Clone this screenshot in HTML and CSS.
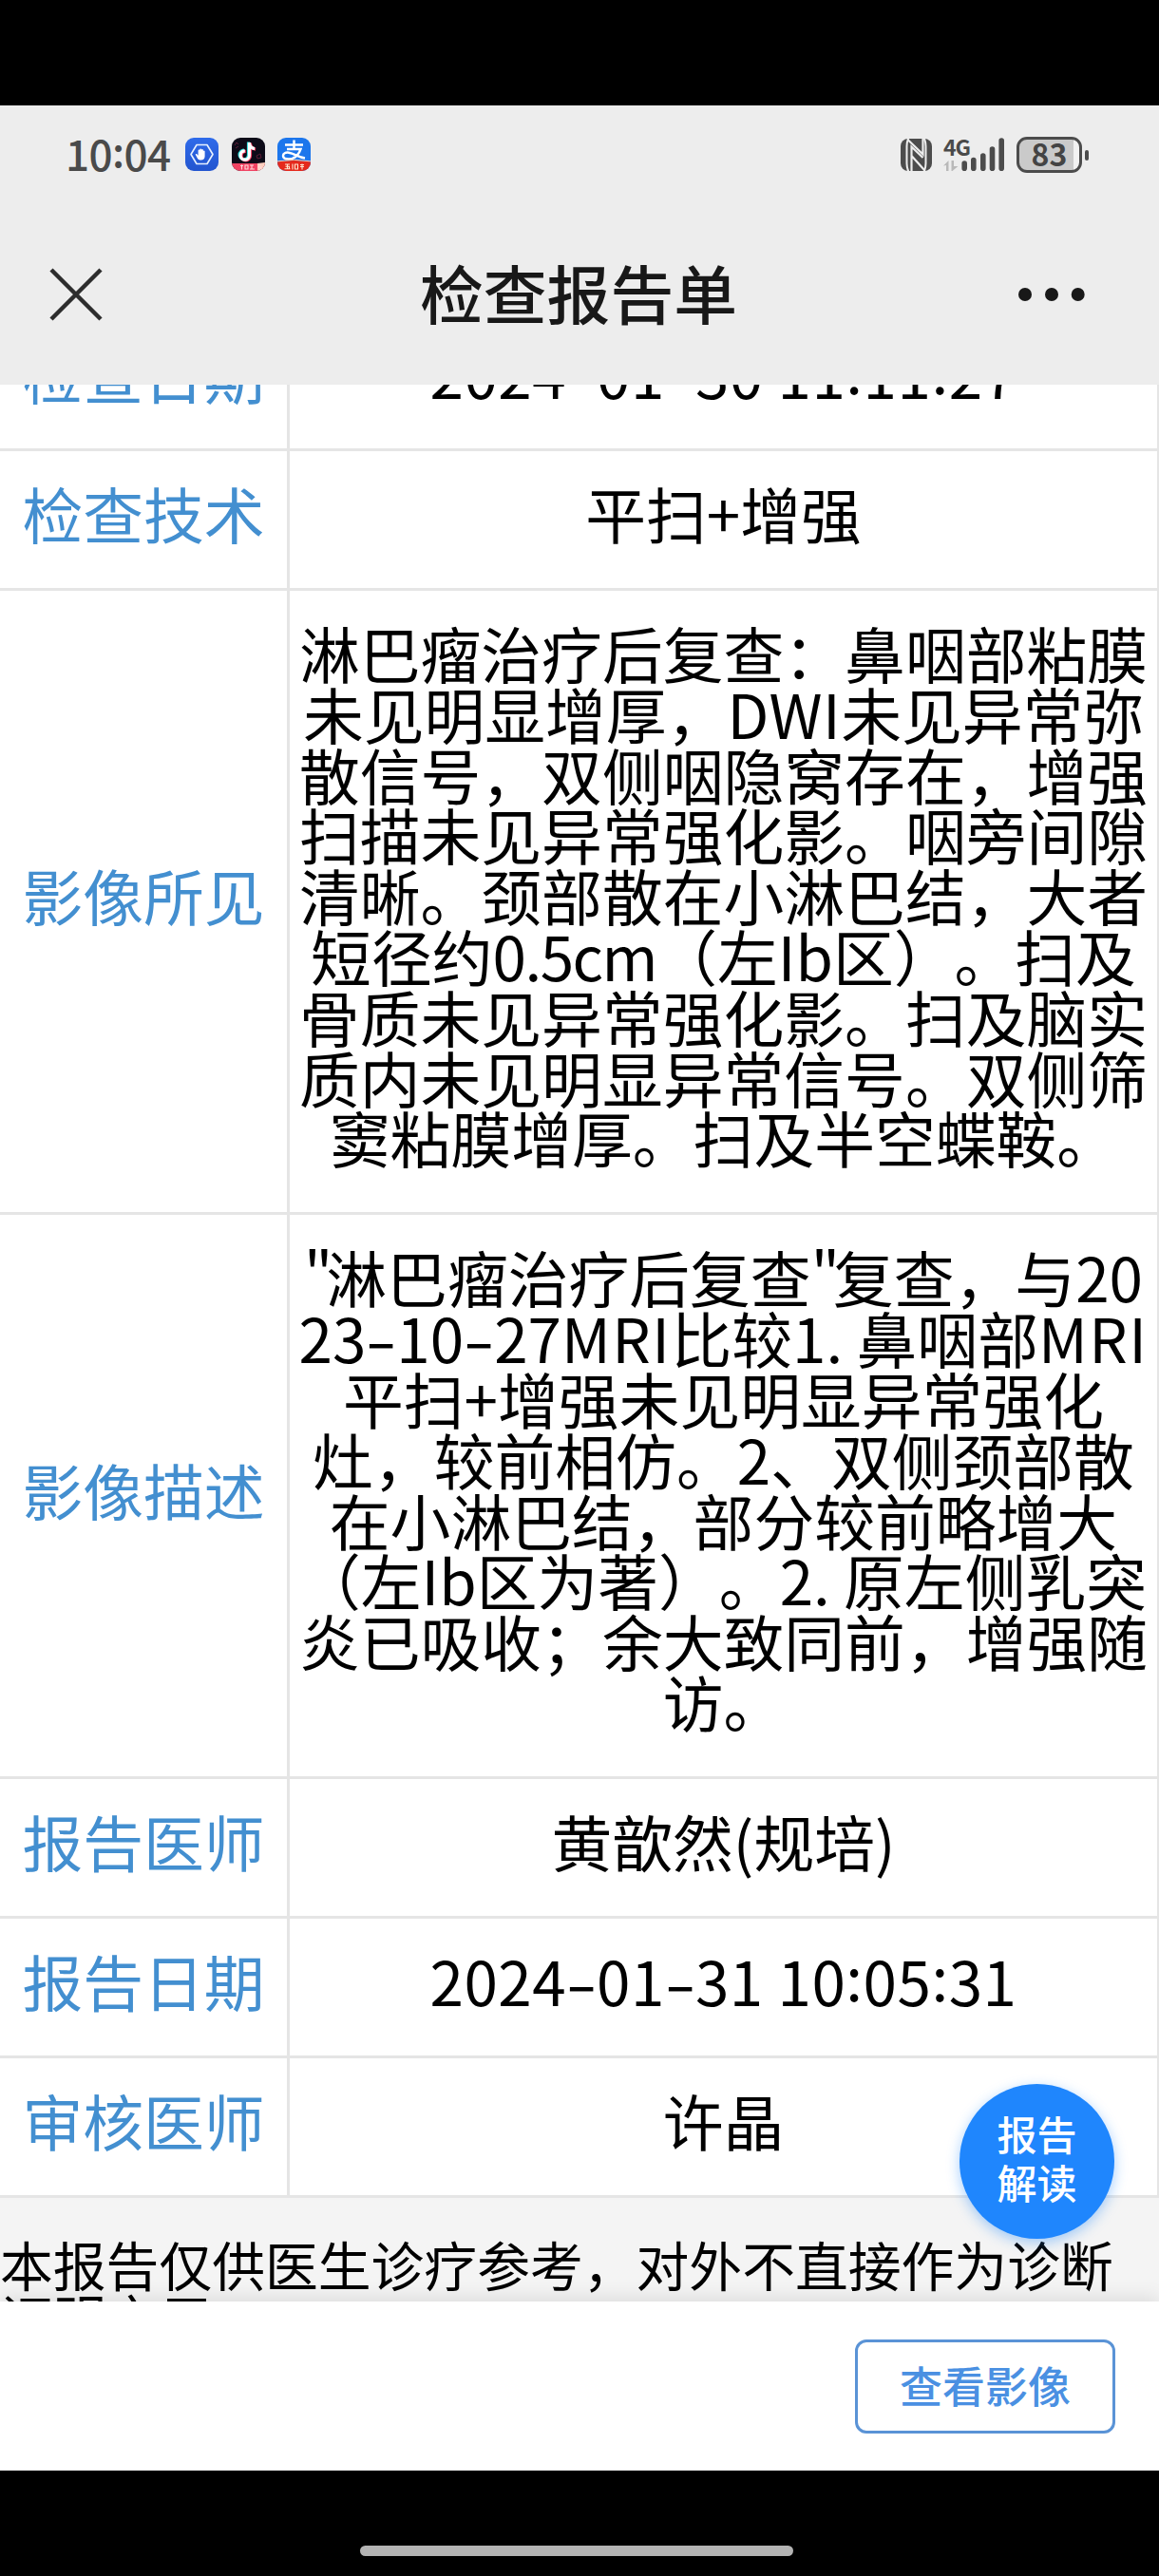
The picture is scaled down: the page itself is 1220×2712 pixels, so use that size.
FILE: index.html
```html
<!DOCTYPE html>
<html lang="zh-CN">
<head>
<meta charset="utf-8">
<title>检查报告单</title>
<link rel="stylesheet" href="styles.css">
</head>
<body>
<div class="phone">
  <header class="top">
    <div class="status">
      <span class="clock">10<span class="colon">:</span>04</span>
      <div class="apps">
        <svg class="app" viewBox="0 0 35 35">
          <defs><linearGradient id="blue" x1="0" y1="0" x2="0" y2="1"><stop offset="0" stop-color="#2f6bea"/><stop offset="1" stop-color="#2355cf"/></linearGradient></defs>
          <rect width="35" height="35" rx="9" fill="url(#blue)"/>
          <path d="M12 7.5h11l6 10-6 10H12l-6-10z" fill="none" stroke="#e8f1ff" stroke-width="1.6" stroke-linejoin="round"/>
          <path d="M13.2 22.3l-2.3-4.2c-.5-1 .7-1.6 1.400-.8l1.300 1.500v-5.300c0-1.200 1.700-1.200 1.700 0v-1c0-1.200 1.800-1.200 1.800 0v.500c0-1.200 1.800-1.200 1.800 0v1.200c0-1.100 1.700-1.100 1.700 0v5.300c0 2.500-1.500 4-4 4-1.600 0-2.600-.3-3.400-1.200z" fill="#fff"/>
        </svg>
        <svg class="app" viewBox="0 0 35 35">
          <defs><clipPath id="tile"><rect width="35" height="35" rx="9"/></clipPath></defs>
          <g clip-path="url(#tile)">
            <rect width="35" height="35" fill="#0d0b18"/>
            <path d="M3 8l2-3 2 2M4 11l3-2M26 19l4-2 1 4-4 1z" fill="none" stroke="#5d1c36" stroke-width="1"/>
            <g fill="none" stroke-width="3.200">
              <path d="M18.500 5v13.500a4.700 4.700 0 1 1-4.700-4.700M18.500 6c.6 3.600 2.500 5.200 5.600 5.500" stroke="#2ce0e0" transform="translate(-1 -.6)"/>
              <path d="M18.500 5v13.500a4.700 4.700 0 1 1-4.700-4.700M18.500 6c.6 3.600 2.500 5.200 5.600 5.500" stroke="#f5365c" transform="translate(1 .6)"/>
              <path d="M18.500 5v13.500a4.700 4.700 0 1 1-4.700-4.700M18.500 6c.6 3.600 2.500 5.200 5.600 5.500" stroke="#fff"/>
            </g>
            <path d="M0 27h35v8H0z" fill="#f04363"/>
            <path d="M27 27l8-1v9h-8z" fill="#ffd0c0"/>
            <path d="M9 29.500h3m-1.500-1v5M14 29h3v4h-3zM19 29h4m-2 0v4m-2 0h5M30 28l-2 3h3l-2 3" fill="none" stroke="#ffd9d9" stroke-width="1.100"/>
          </g>
        </svg>
        <svg class="app" viewBox="0 0 35 35">
          <g clip-path="url(#tile)">
            <rect width="35" height="35" fill="#1c76ec"/>
            <path d="M8 7.500h19M17.500 2.500v9.500M10 12h14.500c-1.500 5-6 10.500-12.500 10.500-4 0-6-1.500-6-3.500 0-2.500 2.500-3.800 6-3.300 6 .9 9.500 4.600 17 5.800" fill="none" stroke="#fff" stroke-width="2.500"/>
            <path d="M0 25.500q17.500-3 35 0V35H0z" fill="#e5291c"/>
            <path d="M0 24.800q17.500-3 35 0" fill="none" stroke="#ffc9a8" stroke-width="1"/>
            <path d="M8 28h5m-2.500 0v4.500M8.500 30.200h4v2.300M7.500 32.700h6M16 27.500v6M18.500 28h3v5h-3zM24 28.500h4M26 27.500v6M24 30.500h4" fill="none" stroke="#ffe6cf" stroke-width="1.100"/>
          </g>
        </svg>
      </div>
      <svg class="nfc" viewBox="0 0 33 34">
        <rect width="33" height="34" rx="8" fill="#4c4c4c"/>
        <path d="M8.500-1Q6.500 3 6.500 8v18q0 5 2 9M24.500-1q2 4 2 9v18q0 5-2 9" fill="none" stroke="#ededed" stroke-width="2"/>
        <path d="M8 1.500L23.500 16.500V0M23.500 20L11.500 8.500V35M11.500 18L25 33" fill="none" stroke="#ededed" stroke-width="2.200"/>
      </svg>
      <div class="cell">
        <span class="net">4G</span>
        <svg class="bars" viewBox="0 0 65 36">
          <path d="M0 29.500L5.500 24v11H3v-6z" fill="#b9b9b9"/>
          <path d="M8.500 24H11v6h4.500L9.500 35h-1z" fill="#b9b9b9"/>
          <g stroke="#4c4c4c" stroke-width="5.600" stroke-linecap="round"><path d="M22.200 27v5.200M31.800 23.500v8.700M41.800 19v13.200M51.500 12v20.200M61.200 3v29.200"/></g>
        </svg>
      </div>
      <div class="battery"><span class="level">83</span></div>
    </div>
    <div class="nav">
      <svg class="close" viewBox="0 0 56 56"><path d="M2 2l52 52M54 2L2 54" stroke="#2d2d2d" stroke-width="4.500"/></svg>
      <h1 class="title">检查报告单</h1>
      <svg class="more" viewBox="0 0 70 16"><circle cx="7" cy="8" r="7"/><circle cx="35" cy="8" r="7"/><circle cx="62.700" cy="8" r="7"/></svg>
    </div>
  </header>

  <main class="page">
    <div class="table">
      <div class="row"><div class="key">检查日期</div><div class="val"><p class="date">2024<span class="dash">-</span>01<span class="dash">-</span>30 11<span class="colon">:</span>11<span class="colon">:</span>27</p></div></div>
      <div class="row"><div class="key">检查技术</div><div class="val"><p>平扫+增强</p></div></div>
      <div class="row"><div class="key">影像所见</div><div class="val">
        <p>淋巴瘤治疗后复查：鼻咽部粘膜</p>
        <p>未见明显增厚，<span class="dwi">DWI</span>未见异常弥</p>
        <p>散信号，双侧咽隐窝存在，增强</p>
        <p>扫描未见异常强化影。咽旁间隙</p>
        <p>清晰。颈部散在小淋巴结，大者</p>
        <p>短径约<span class="size">0.5cm</span>（左Ib区）。扫及</p>
        <p>骨质未见异常强化影。扫及脑实</p>
        <p>质内未见明显异常信号。双侧筛</p>
        <p>窦粘膜增厚。扫及半空蝶鞍。</p>
      </div></div>
      <div class="row"><div class="key">影像描述</div><div class="val">
        <p><span class="quote">"</span>淋巴瘤治疗后复查<span class="quote">"</span>复查，与<span class="num">20</span></p>
        <p><span class="num">23<span class="dash">-</span>10<span class="dash">-</span>27</span><span class="mri">MRI</span>比较1. 鼻咽部<span class="mri">MRI</span></p>
        <p>平扫+增强未见明显异常强化</p>
        <p>灶，较前相仿。2、双侧颈部散</p>
        <p>在小淋巴结，部分较前略增大</p>
        <p>（左Ib区为著）。2. 原左侧乳突</p>
        <p>炎已吸收；余大致同前，增强随</p>
        <p>访。</p>
      </div></div>
      <div class="row"><div class="key">报告医师</div><div class="val"><p>黄歆然(规培)</p></div></div>
      <div class="row"><div class="key">报告日期</div><div class="val"><p class="date">2024<span class="dash">-</span>01<span class="dash">-</span>31 10<span class="colon">:</span>05<span class="colon">:</span>31</p></div></div>
      <div class="row"><div class="key">审核医师</div><div class="val"><p>许晶</p></div></div>
    </div>
    <p class="notice">本报告仅供医生诊疗参考，对外不直接作为诊断<br>证明之用</p>
  </main>

  <footer class="actions"><button class="view">查看影像</button></footer>
  <div class="home"><div class="pill"></div></div>
  <div class="fab"><span>报告</span><span>解读</span></div>
</div>
</body>
</html>
```
FILE: styles.css
```css
* { box-sizing: border-box; margin: 0; padding: 0; }

body {
  background: #000;
  font-family: "Noto Sans CJK SC", sans-serif;
  text-spacing-trim: space-all;
  color: #000;
}

.phone {
  position: relative;
  display: flex;
  flex-direction: column;
  width: 1220px;
  height: 2712px;
  padding-top: 111px;
  overflow: hidden;
}

.top { flex: none; height: 294px; background: #ededed; }

.status {
  display: flex;
  align-items: center;
  height: 103px;
  padding: 0 81px 0 69px;
  color: #4a4a4a;
}
.clock { font-size: 44px; line-height: 50px; width: 126px; font-weight: 500; letter-spacing: -.6px; margin-top: -3px; }
.apps { display: flex; gap: 13.700px; margin-right: auto; }
.app { width: 35px; height: 35px; }
.nfc { width: 33px; height: 34px; margin-right: 12px; }
.cell { position: relative; width: 65px; height: 36px; margin-right: 12px; }
.net { position: absolute; left: 0; top: -1px; font-size: 23px; line-height: 20px; font-weight: 700; letter-spacing: -1px; }
.bars { display: block; width: 65px; height: 36px; }
.battery {
  position: relative;
  width: 69px;
  height: 38px;
  border: 3px solid #4c4c4c;
  border-radius: 11px;
  background: linear-gradient(90deg, #cacaca 57px, #f2f2f2 57px);
}
.battery::after {
  content: "";
  position: absolute;
  right: -10px;
  top: 11px;
  width: 4px;
  height: 11px;
  border-radius: 2px;
  background: #4c4c4c;
}
.level { display: block; text-align: center; font-size: 32px; line-height: 28px; font-weight: 700; color: #444; }

.nav { display: grid; grid-template-columns: 70px 1fr 70px; align-items: center; height: 191px; padding: 0 76px 0 52px; }
.close { width: 56px; height: 56px; }
.title { justify-self: center; font-size: 66.800px; line-height: 80px; font-weight: 500; color: #181818; margin: -5px 0 0 22px; }
.more { width: 70px; height: 16px; fill: #181818; margin-left: -2px; }

.page { flex: none; height: 2018px; overflow: hidden; background: #f4f4f4; }
.table { margin-top: -77px; }
.row {
  display: grid;
  grid-template-columns: 305px 1fr;
  background: #fff;
  border-bottom: 3px solid #e5e5e5;
  border-right: 2px solid #e5e5e5;
  font-size: 63.800px;
  line-height: 63.800px;
}
.key {
  display: flex;
  align-items: center;
  justify-content: center;
  padding: 33px 0 47.200px;
  border-right: 3px solid #e5e5e5;
  color: #438fd0;
}
.val { padding: 33px 0 47.200px; }
.val p { height: 63.800px; display: flex; justify-content: center; white-space: pre; }
.date { letter-spacing: .500px; }
.dash { display: inline-block; width: 32px; text-align: center; transform: scaleX(1.500); letter-spacing: 0; }
.colon { display: inline-block; transform: translateY(-.08em); }
.dwi { letter-spacing: .500px; }
.size { letter-spacing: -1.500px; }
.quote { letter-spacing: -7px; }
.mri { letter-spacing: 1.500px; }

.notice { margin-top: 41px; font-size: 55.800px; line-height: 56px; white-space: nowrap; }

.actions {
  position: relative;
  flex: none;
  display: flex;
  justify-content: flex-end;
  align-items: center;
  height: 178px;
  padding-right: 46px;
  background: #fff;
  box-shadow: 0 -4px 18px rgba(0, 0, 0, .1);
}
.view {
  width: 274px;
  height: 99px;
  border: 3px solid #5a93d6;
  border-radius: 12px;
  background: #fff;
  color: #4a90e2;
  font: 500 45px/60px "Noto Sans CJK SC", sans-serif;
  padding-bottom: 3px;
}

.home { flex: 1; display: flex; justify-content: center; align-items: flex-start; padding: 79px 6px 0 0; background: #000; position: relative; }
.pill { width: 456px; height: 11px; border-radius: 6px; background: #b3b3b3; }

.fab {
  position: absolute;
  left: 1010px;
  top: 2194px;
  width: 163px;
  height: 163px;
  display: flex;
  flex-direction: column;
  align-items: center;
  padding-top: 27px;
  border-radius: 50%;
  background: #1f86fd;
  box-shadow: 0 4px 14px rgba(31, 134, 253, .4);
  color: #fff;
  font-size: 42px;
  font-weight: 500;
  line-height: 50.500px;
}
```
